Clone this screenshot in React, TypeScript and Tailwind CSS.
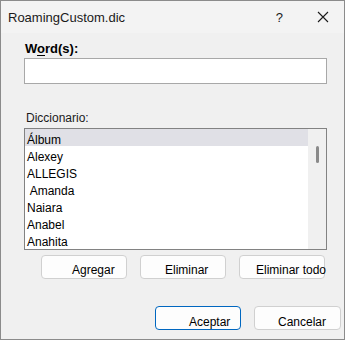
import React from "react";

const words = ["Álbum", "Alexey", "ALLEGIS", " Amanda", "Naiara", "Anabel", "Anahita"];

export default function App() {
  return (
    <div
      className="w-[345px] h-[340px] box-border border border-[#8b8b8b] bg-[#f0f0f0] flex flex-col text-black"
      style={{ fontFamily: '"Liberation Sans", Arial, sans-serif' }}
    >
      {/* Title bar */}
      <div className="h-[32px] shrink-0 bg-[#f3f3f3] flex items-center">
        <span className="pl-[7px] text-[13px] leading-[16px] pt-[1px] text-[#1a1a1a]">RoamingCustom.dic</span>
        <span className="ml-auto mr-[34px] text-[13px] leading-[16px] pt-[1px] text-[#1a1a1a]">?</span>
        <svg width="12" height="12" viewBox="0 0 12 12" className="mr-[15px]">
          <path d="M1 1 L11 11 M11 1 L1 11" stroke="#1a1a1a" strokeWidth="1.1" fill="none" />
        </svg>
      </div>

      {/* Body */}
      <div className="flex flex-col pl-[23px]">
        <div className="mt-[7px] h-[16px] pl-[1px] text-[13px] leading-[17px] font-bold">
          W<span className="underline underline-offset-2">o</span>rd(s):
        </div>
        <div className="mt-[2px] w-[303px] h-[26px] box-border border border-[#a8a8a8] bg-white" />

        <div className="mt-[26px] h-[16px] pl-[2px] text-[12px] leading-[16px] text-[#1a1a1a]">Diccionario:</div>

        <div className="mt-[2px] w-[303px] h-[122px] box-border border border-[#828282] bg-white flex overflow-hidden">
          <div className="flex-1 flex flex-col">
            {words.map((w, i) => (
              <div
                key={i}
                className={
                  "h-[17px] shrink-0 pl-[2px] text-[12px] leading-[22px] whitespace-pre " +
                  (i === 0 ? "bg-[#e0e0e6]" : "")
                }
              >
                {w}
              </div>
            ))}
          </div>
          <div className="w-[18px] shrink-0 bg-[#f0f0f0] flex justify-center">
            <div className="mt-[17px] w-[3px] h-[17px] rounded-full bg-[#8a8a8a]" />
          </div>
        </div>

        <div className="mt-[5px] pl-[17px] flex gap-[13px]">
          <button className="w-[86px] h-[24px] box-border rounded-[4px] border border-[#d0d0d0] bg-[#fdfdfd] text-left pl-[30px] pt-[6px] text-[12px] leading-[16px] whitespace-nowrap flex items-start">
            Agregar
          </button>
          <button className="w-[86px] h-[24px] box-border rounded-[4px] border border-[#d0d0d0] bg-[#fdfdfd] text-left pl-[24px] pt-[6px] text-[12px] leading-[16px] whitespace-nowrap flex items-start">
            Eliminar
          </button>
          <button className="w-[86px] h-[24px] box-border rounded-[4px] border border-[#d0d0d0] bg-[#fdfdfd] text-left pl-[16px] pt-[6px] text-[12px] leading-[16px] whitespace-nowrap flex items-start overflow-visible">
            Eliminar todo
          </button>
        </div>

        <div className="mt-[27px] pl-[131px] flex gap-[13px]">
          <button className="w-[86px] h-[24px] box-border rounded-[4px] border border-[#0067c0] bg-[#fdfdfd] text-left pl-[33px] pt-[7px] text-[12px] leading-[16px] whitespace-nowrap flex items-start">
            Aceptar
          </button>
          <button className="w-[87px] h-[24px] box-border rounded-[4px] border border-[#d0d0d0] bg-[#fdfdfd] text-left pl-[23px] pt-[7px] text-[12px] leading-[16px] whitespace-nowrap flex items-start">
            Cancelar
          </button>
        </div>
      </div>
    </div>
  );
}
